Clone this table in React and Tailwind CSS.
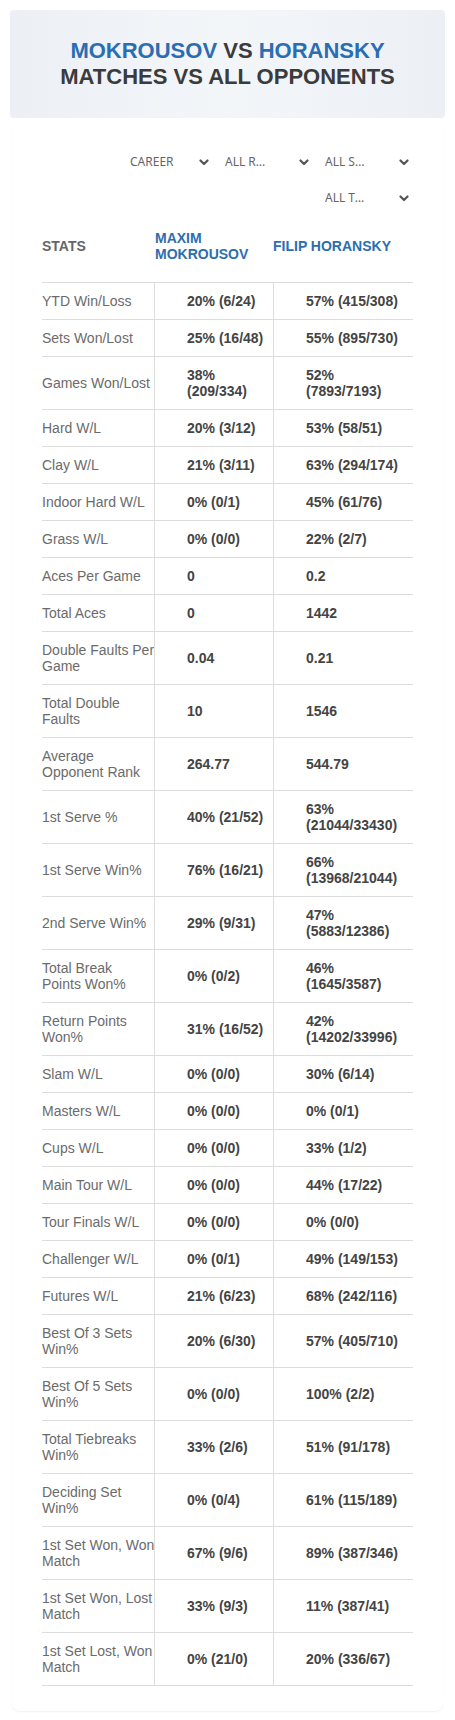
import React from "react";

const rows = [
  ["YTD Win/Loss", "20% (6/24)", "57% (415/308)"],
  ["Sets Won/Lost", "25% (16/48)", "55% (895/730)"],
  ["Games Won/Lost", "38% (209/334)", "52% (7893/7193)"],
  ["Hard W/L", "20% (3/12)", "53% (58/51)"],
  ["Clay W/L", "21% (3/11)", "63% (294/174)"],
  ["Indoor Hard W/L", "0% (0/1)", "45% (61/76)"],
  ["Grass W/L", "0% (0/0)", "22% (2/7)"],
  ["Aces Per Game", "0", "0.2"],
  ["Total Aces", "0", "1442"],
  ["Double Faults Per Game", "0.04", "0.21"],
  ["Total Double Faults", "10", "1546"],
  ["Average Opponent Rank", "264.77", "544.79"],
  ["1st Serve %", "40% (21/52)", "63% (21044/33430)"],
  ["1st Serve Win%", "76% (16/21)", "66% (13968/21044)"],
  ["2nd Serve Win%", "29% (9/31)", "47% (5883/12386)"],
  ["Total Break\nPoints Won%", "0% (0/2)", "46% (1645/3587)"],
  ["Return Points Won%", "31% (16/52)", "42% (14202/33996)"],
  ["Slam W/L", "0% (0/0)", "30% (6/14)"],
  ["Masters W/L", "0% (0/0)", "0% (0/1)"],
  ["Cups W/L", "0% (0/0)", "33% (1/2)"],
  ["Main Tour W/L", "0% (0/0)", "44% (17/22)"],
  ["Tour Finals W/L", "0% (0/0)", "0% (0/0)"],
  ["Challenger W/L", "0% (0/1)", "49% (149/153)"],
  ["Futures W/L", "21% (6/23)", "68% (242/116)"],
  ["Best Of 3 Sets Win%", "20% (6/30)", "57% (405/710)"],
  ["Best Of 5 Sets Win%", "0% (0/0)", "100% (2/2)"],
  ["Total Tiebreaks Win%", "33% (2/6)", "51% (91/178)"],
  ["Deciding Set Win%", "0% (0/4)", "61% (115/189)"],
  ["1st Set Won, Won Match", "67% (9/6)", "89% (387/346)"],
  ["1st Set Won, Lost Match", "33% (9/3)", "11% (387/41)"],
  ["1st Set Lost, Won Match", "0% (21/0)", "20% (336/67)"],
];

const Chevron = () => (
  <svg width="10" height="7" viewBox="0 0 10 7" className="shrink-0">
    <polyline
      points="1.5,1.5 5,5 8.5,1.5"
      fill="none"
      stroke="#555"
      strokeWidth="2.2"
      strokeLinecap="round"
      strokeLinejoin="round"
    />
  </svg>
);

const Select = ({ label, w }) => (
  <div className={`flex items-center h-6 pl-2 pr-1 ${w}`}>
    <span className="w-[46px] text-[12px] text-[#666] truncate">{label}</span>
    <span className="ml-auto">
      <Chevron />
    </span>
  </div>
);

export default function App() {
  return (
    <div className="w-[455px] min-h-[1720px] bg-white p-[10px] font-['Liberation_Sans',Arial,sans-serif]">
      {/* title card */}
      <div className="rounded bg-gradient-to-r from-[#ecf0f5] via-[#f3f6f9] to-[#ecf0f5] py-[28px] text-center">
        <h1 className="text-[22px] leading-[26px] font-bold">
          <span className="text-[#2b6db2]">MOKROUSOV</span>
          <span className="text-[#3b3b3b]"> VS </span>
          <span className="text-[#2b6db2]">HORANSKY</span>
          <br />
          <span className="text-[#3b3b3b]">MATCHES VS ALL OPPONENTS</span>
        </h1>
      </div>

      {/* stats card */}
      <div className="mx-[2px] mt-2 rounded-lg bg-white shadow-[0_1px_2px_rgba(0,0,0,0.06)] px-[30px] pt-6 pb-[25px]">
        <div className="flex flex-col gap-3 font-['Noto_Sans',sans-serif]">
          <div className="flex justify-end">
            <Select label="CAREER" w="w-[91px]" />
            <Select label="ALL RESULTS" w="w-[96px] ml-1" />
            <Select label="ALL SURFACES" w="w-[96px] ml-1" />
          </div>
          <div className="flex justify-end">
            <Select label="ALL TOURNAMENTS" w="w-[96px]" />
          </div>
        </div>

        <div className="flex items-center h-[72px] text-[14px] leading-4 font-bold">
          <div className="w-[112px] text-[#666]">STATS</div>
          <div className="w-[119px] pl-px pr-3 text-[#2c6eae]">MAXIM MOKROUSOV</div>
          <div className="w-[140px] text-[#2c6eae]">FILIP HORANSKY</div>
        </div>

        <div className="border-b border-[#dddddd]">
          {rows.map(([label, a, b]) => (
            <div
              key={label}
              className="flex border-t border-[#dddddd] text-[14px] leading-4"
            >
              <div className="w-[112px] shrink-0 py-[10px] text-[#6b6b6b] flex items-center">
                <span className="w-[113px] shrink-0 whitespace-pre-line">{label}</span>
              </div>
              <div className="w-[119px] shrink-0 border-l border-[#dddddd] pl-8 pr-2 py-[10px] font-bold text-[#444] flex items-center">
                {a}
              </div>
              <div className="w-[140px] shrink-0 border-l border-[#dddddd] pl-8 pr-2 py-[10px] font-bold text-[#444] flex items-center">
                {b}
              </div>
            </div>
          ))}
        </div>
      </div>
    </div>
  );
}
